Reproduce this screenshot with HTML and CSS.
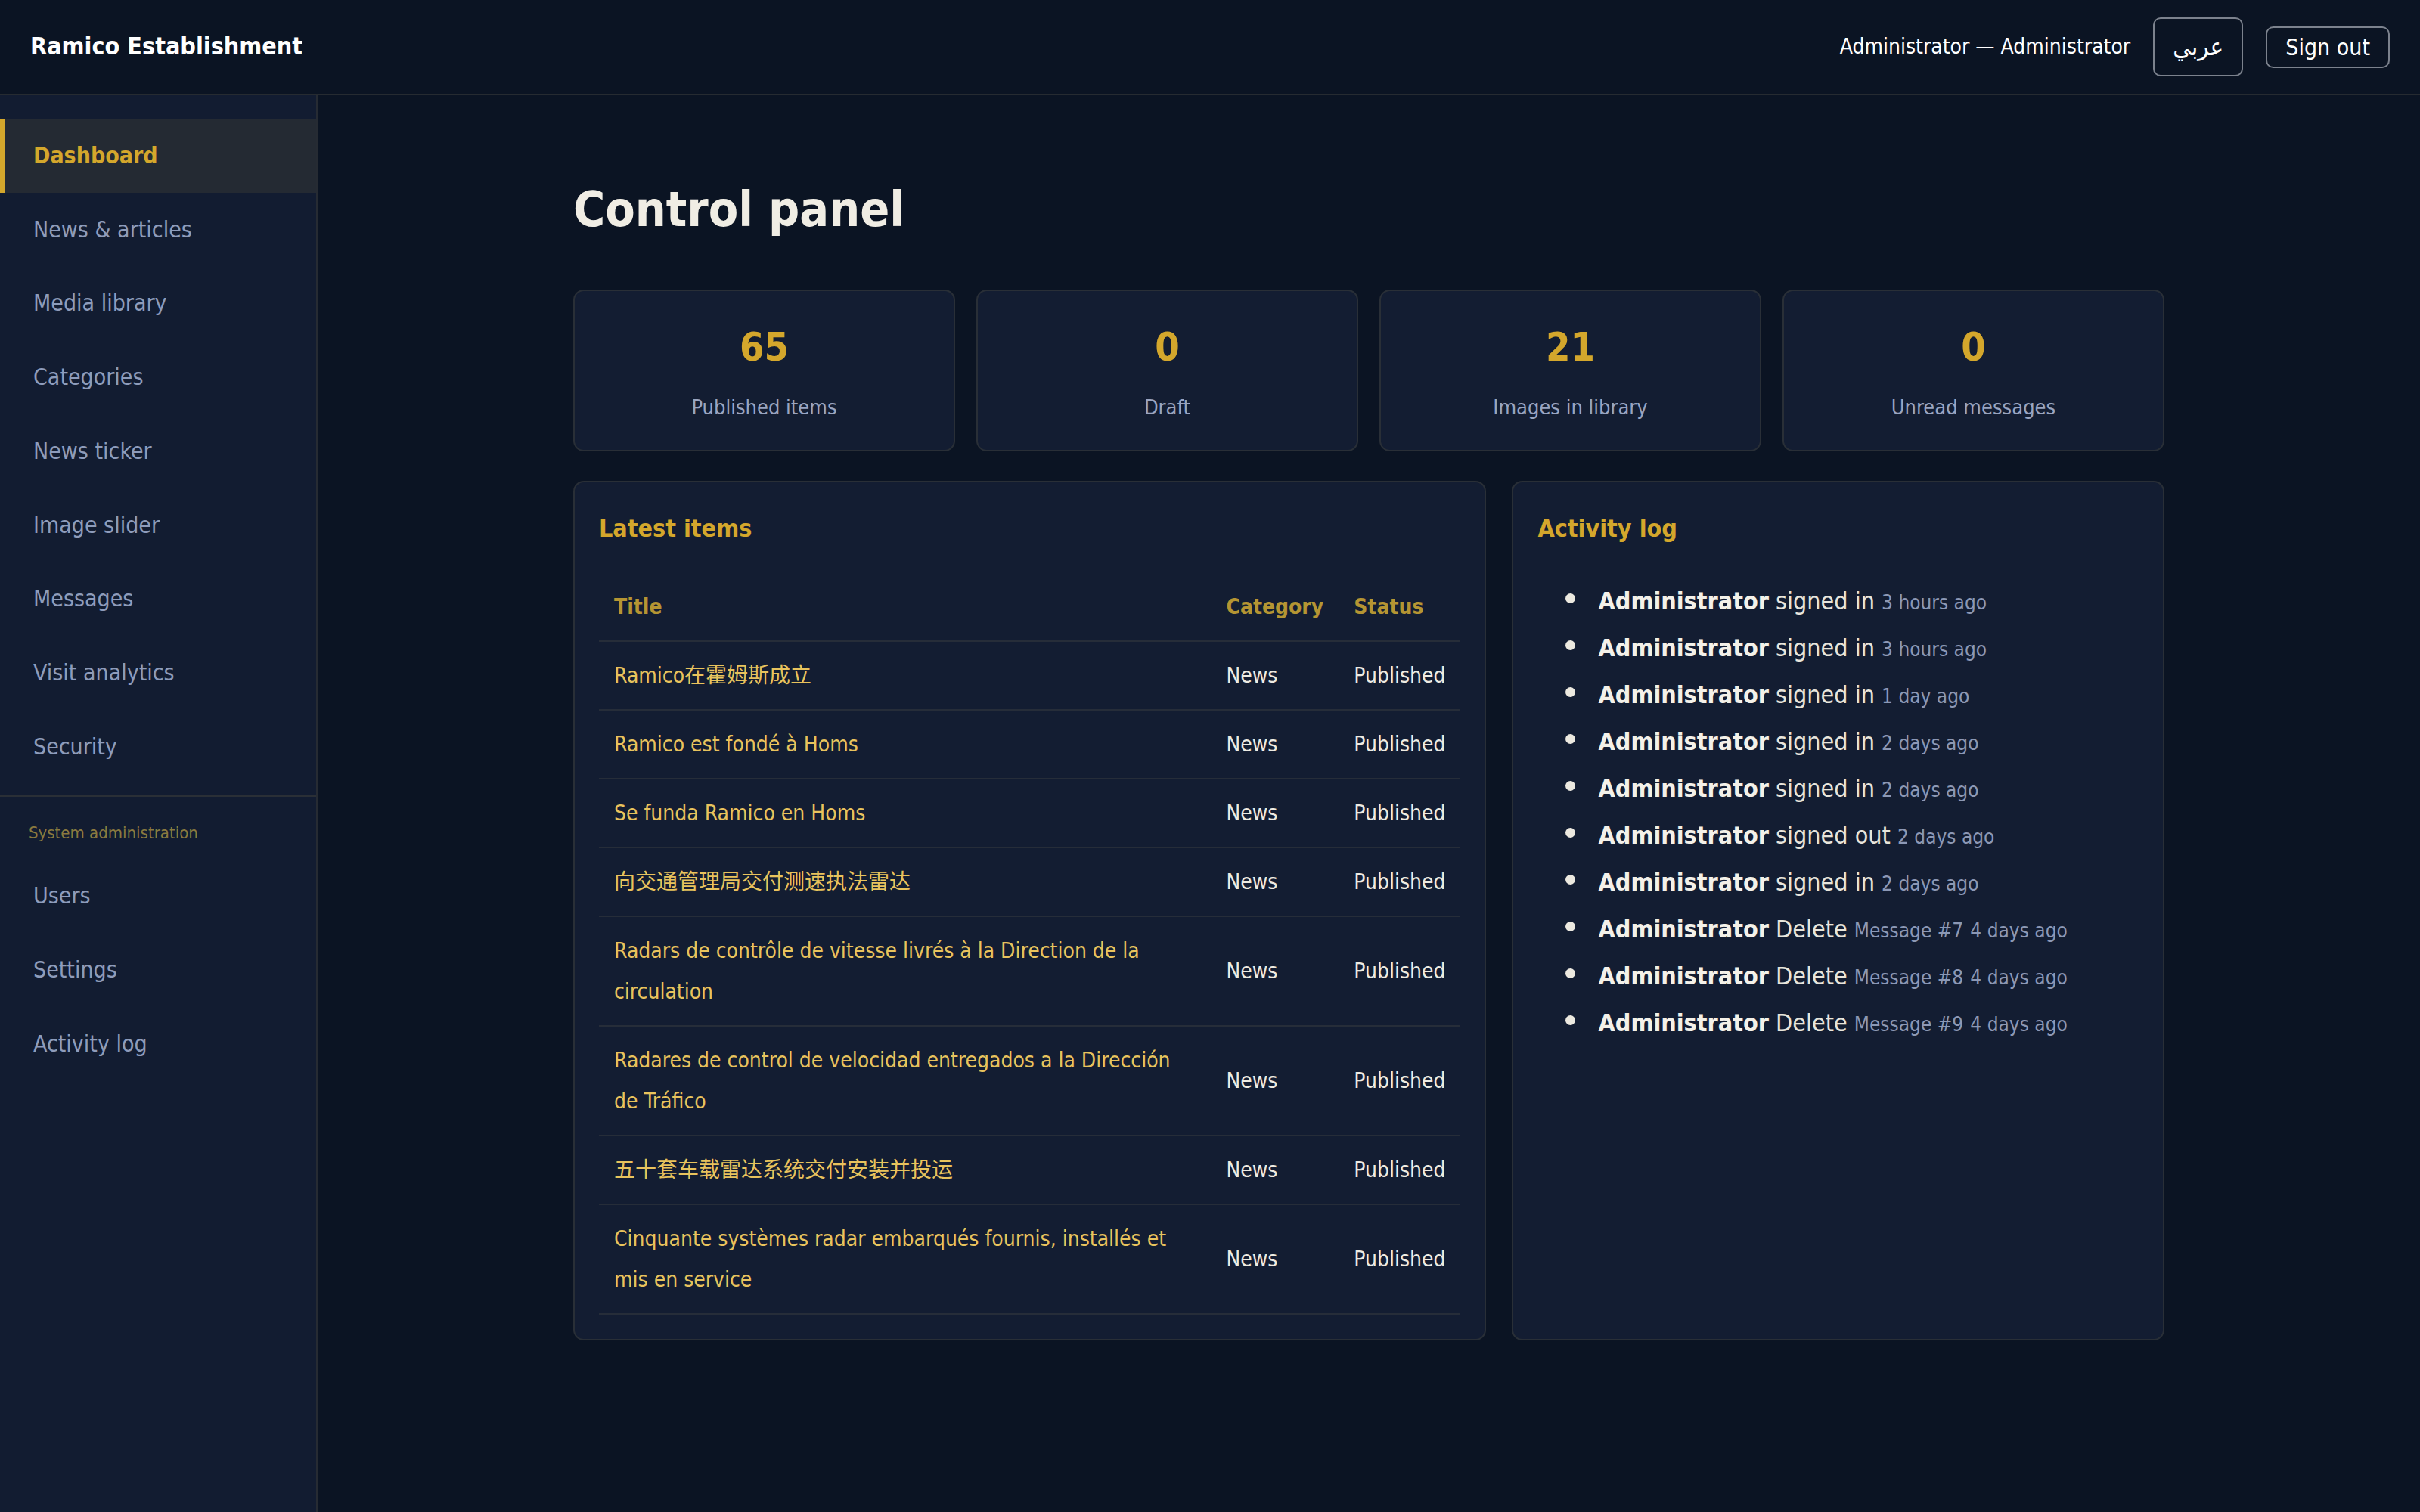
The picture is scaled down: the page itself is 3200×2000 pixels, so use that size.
FILE: index.html
```html
<!DOCTYPE html>
<html lang="en">
<head>
    <meta charset="UTF-8">
    <meta name="viewport" content="width=device-width, initial-scale=1.0">
    <title>Control panel - Ramico Establishment</title>
    <link rel="stylesheet" href="styles.css">
</head>
<body>
    <header class="topbar">
        <div class="brand">Ramico Establishment</div>
        <div class="topbar-right">
            <span class="user">Administrator — Administrator</span>
            <a href="#" class="btn btn-lang" lang="ar">عربي</a>
            <a href="#" class="btn">Sign out</a>
        </div>
    </header>

    <div class="layout">
        <aside class="sidebar">
            <nav class="side-nav">
                <a href="#" class="nav-link active">Dashboard</a>
                <a href="#" class="nav-link">News &amp; articles</a>
                <a href="#" class="nav-link">Media library</a>
                <a href="#" class="nav-link">Categories</a>
                <a href="#" class="nav-link">News ticker</a>
                <a href="#" class="nav-link">Image slider</a>
                <a href="#" class="nav-link">Messages</a>
                <a href="#" class="nav-link">Visit analytics</a>
                <a href="#" class="nav-link">Security</a>
            </nav>
            <hr class="nav-divider">
            <div class="nav-section">System administration</div>
            <nav class="side-nav">
                <a href="#" class="nav-link">Users</a>
                <a href="#" class="nav-link">Settings</a>
                <a href="#" class="nav-link">Activity log</a>
            </nav>
        </aside>

        <main class="main">
            <div class="container">
                <h1>Control panel</h1>

                <div class="stats">
                    <div class="stat-card">
                        <div class="stat-num">65</div>
                        <div class="stat-label">Published items</div>
                    </div>
                    <div class="stat-card">
                        <div class="stat-num">0</div>
                        <div class="stat-label">Draft</div>
                    </div>
                    <div class="stat-card">
                        <div class="stat-num">21</div>
                        <div class="stat-label">Images in library</div>
                    </div>
                    <div class="stat-card">
                        <div class="stat-num">0</div>
                        <div class="stat-label">Unread messages</div>
                    </div>
                </div>

                <div class="panels">
                    <section class="panel">
                        <h2>Latest items</h2>
                        <table class="items">
                            <thead>
                                <tr><th>Title</th><th>Category</th><th>Status</th></tr>
                            </thead>
                            <tbody>
                                <tr><td><a href="#">Ramico在霍姆斯成立</a></td><td>News</td><td>Published</td></tr>
                                <tr><td><a href="#">Ramico est fondé à Homs</a></td><td>News</td><td>Published</td></tr>
                                <tr><td><a href="#">Se funda Ramico en Homs</a></td><td>News</td><td>Published</td></tr>
                                <tr><td><a href="#">向交通管理局交付测速执法雷达</a></td><td>News</td><td>Published</td></tr>
                                <tr><td><a href="#">Radars de contrôle de vitesse livrés à la Direction de la circulation</a></td><td>News</td><td>Published</td></tr>
                                <tr><td><a href="#">Radares de control de velocidad entregados a la Dirección de Tráfico</a></td><td>News</td><td>Published</td></tr>
                                <tr><td><a href="#">五十套车载雷达系统交付安装并投运</a></td><td>News</td><td>Published</td></tr>
                                <tr><td><a href="#">Cinquante systèmes radar embarqués fournis, installés et mis en service</a></td><td>News</td><td>Published</td></tr>
                            </tbody>
                        </table>
                    </section>

                    <section class="panel">
                        <h2>Activity log</h2>
                        <ul class="log">
                            <li><strong>Administrator</strong> signed in <span class="muted">3 hours ago</span></li>
                            <li><strong>Administrator</strong> signed in <span class="muted">3 hours ago</span></li>
                            <li><strong>Administrator</strong> signed in <span class="muted">1 day ago</span></li>
                            <li><strong>Administrator</strong> signed in <span class="muted">2 days ago</span></li>
                            <li><strong>Administrator</strong> signed in <span class="muted">2 days ago</span></li>
                            <li><strong>Administrator</strong> signed out <span class="muted">2 days ago</span></li>
                            <li><strong>Administrator</strong> signed in <span class="muted">2 days ago</span></li>
                            <li><strong>Administrator</strong> Delete <span class="muted">Message #7</span> <span class="muted">4 days ago</span></li>
                            <li><strong>Administrator</strong> Delete <span class="muted">Message #8</span> <span class="muted">4 days ago</span></li>
                            <li><strong>Administrator</strong> Delete <span class="muted">Message #9</span> <span class="muted">4 days ago</span></li>
                        </ul>
                    </section>
                </div>
            </div>
        </main>
    </div>
</body>
</html>
```

FILE: styles.css
```css
* {
    box-sizing: border-box;
}
body {
    font-family: "DejaVu Sans Condensed", "DejaVu Sans", "Noto Sans CJK SC", sans-serif;
    font-stretch: condensed;
    font-size: 28px;
    line-height: 1.8;
    margin: 0;
    padding: 0;
    background-color: #0b1423;
    color: #eeebe2;
}
a {
    text-decoration: none;
    color: inherit;
}

/* top bar */
.topbar {
    display: flex;
    align-items: center;
    justify-content: space-between;
    height: 126px;
    padding: 0 40px;
    border-bottom: 2px solid #262b31;
    background: #0b1423;
}
.brand {
    font-size: 32px;
    font-weight: bold;
    color: #fff;
}
.topbar-right {
    display: flex;
    align-items: center;
    gap: 30px;
}
.user {
    font-size: 28px;
    color: #fff;
}
.btn {
    display: inline-block;
    font-size: 30px;
    line-height: 35px;
    padding: 8px 24px;
    border: 2px solid #7c828d;
    border-radius: 10px;
    color: #fff;
}
.btn-lang {
    font-size: 33px;
    line-height: 58px;
    padding: 8px 24px;
}

/* layout */
.layout {
    display: flex;
    min-height: calc(100vh - 126px);
}
.sidebar {
    width: 420px;
    flex-shrink: 0;
    background: #121c31;
    border-right: 2px solid #262b33;
    padding-top: 31px;
}
.side-nav {
    display: flex;
    flex-direction: column;
}
.nav-link {
    display: block;
    font-size: 30px;
    line-height: 33.7px;
    padding: 32px 38px;
    border-left: 6px solid transparent;
    color: #8e9cbb;
}
.nav-link.active {
    background: #242a33;
    border-left-color: #d4a72c;
    color: #d4a72c;
    font-weight: bold;
}
.nav-divider {
    border: 0;
    border-top: 2px solid #2a2f36;
    margin: 16px 0 0;
}
.nav-section {
    font-size: 22px;
    line-height: 40px;
    padding: 28px 38px 14px;
    color: #8a7a3f;
}

/* main */
.main {
    flex: 1;
    padding: 114px 40px 60px;
}
.container {
    max-width: 2104px;
    margin: 0 auto;
}
h1 {
    font-size: 64px;
    line-height: 74px;
    margin: 0 0 69px;
    color: #f0ede4;
}
.stats {
    display: grid;
    grid-template-columns: repeat(4, 1fr);
    gap: 28px;
    margin-bottom: 39px;
}
.stat-card {
    background: #131d32;
    border: 2px solid #292f37;
    border-radius: 14px;
    padding: 32px;
    text-align: center;
}
.stat-num {
    font-size: 52px;
    line-height: 84px;
    font-weight: bold;
    color: #d4a72c;
    margin-bottom: 14px;
}
.stat-label {
    font-size: 27px;
    line-height: 48px;
    color: #9aa5c1;
}

.panels {
    display: grid;
    grid-template-columns: 1.4fr 1fr;
    gap: 34px;
}
.panel {
    background: #131d32;
    border: 2px solid #292f37;
    border-radius: 14px;
    padding: 32px;
}
.panel h2 {
    font-size: 32px;
    line-height: 58px;
    margin: 0 0 30px;
    color: #d4a72c;
}

.items {
    width: 100%;
    border-collapse: collapse;
}
.items th,
.items td {
    padding: 17.5px 20px;
    line-height: 54px;
    text-align: left;
    border-bottom: 2px solid #262d39;
    vertical-align: middle;
}
.items th {
    font-size: 28px;
    color: #b59533;
}
.items td {
    font-size: 28px;
    color: #eeebe2;
}
.items td a {
    color: #e8c35d;
}

.log {
    list-style: none;
    margin: 36px 0 0;
    padding-left: 80px;
}
.log li {
    font-size: 32px;
    line-height: 62px;
    color: #e8e5dc;
}
.log li::before {
    content: "";
    display: inline-block;
    width: 13px;
    height: 13px;
    border-radius: 50%;
    background: #ece9e0;
    margin-left: -43px;
    margin-right: 30px;
    vertical-align: 8px;
}
.log strong {
    color: #f4f1e9;
}
.log .muted {
    font-size: 26px;
    line-height: 1;
    color: #8c98b5;
}
```
